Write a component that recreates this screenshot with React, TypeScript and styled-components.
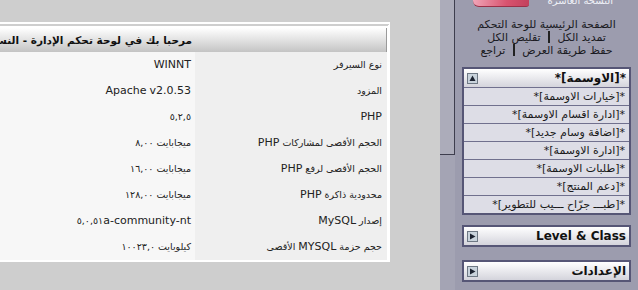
import styled, { createGlobalStyle } from 'styled-components';

const GlobalStyle = createGlobalStyle`
  html, body {
    margin: 0;
    padding: 0;
  }
  body {
    width: 638px;
    height: 290px;
    overflow: hidden;
    background: #cecece;
    font-family: "DejaVu Sans", Tahoma, sans-serif;
  }
`;

const Page = styled.div`
  display: flex;
  width: 638px;
  height: 290px;
  overflow: hidden;
`;

const MainArea = styled.div`
  flex: none;
  width: 440px;
  padding-top: 22px;
  box-sizing: border-box;
  background: #cecece;
  overflow: hidden;
`;

const Panel = styled.div`
  width: 390px;
  box-sizing: border-box;
  direction: rtl;
  border-top: 6px double #fff;
  border-right: 3px solid #fff;
  border-bottom: 2px solid #fff;
`;

const PanelHeader = styled.div`
  height: 24px;
  line-height: 24px;
  padding-right: 194px;
  background: linear-gradient(#ffffff, #c4c4c4);
  border-right: 1px solid #9a9a9a;
  font-weight: bold;
  font-size: 10.5px;
  color: #111;
  white-space: nowrap;
  overflow: hidden;
`;

const Row = styled.div`
  display: grid;
  grid-template-columns: 192px 1fr;
  height: 26px;
  font-size: 9.5px;
  color: #222;
`;

const Cell = styled.div<{ $value?: boolean }>`
  line-height: 26px;
  padding-right: ${(p) => (p.$value ? '4px' : '5px')};
  background: ${(p) => (p.$value ? '#f7f7f7' : '#efefef')};
  white-space: nowrap;
  overflow: hidden;
`;

// latin runs in the table are drawn a size up, like Verdana next to Tahoma arabic
const Latin = styled.span`
  font-size: 11px;
`;

const mixed = (text: string) =>
  text.split(/([A-Za-z][A-Za-z0-9.\-]*)/).map((part, i) => (i % 2 ? <Latin key={i}>{part}</Latin> : part));

const Sidebar = styled.div`
  flex: none;
  display: flex;
  width: 198px;
  height: 290px;
`;

const Strip = styled.div`
  flex: none;
  width: 15px;
  background: #a4a4b4;
`;

const StripBox = styled.div`
  height: 155px;
  box-sizing: border-box;
  background: #acacba;
  border-right: 1px solid #3e3e4e;
  border-bottom: 1px solid #3e3e4e;
`;

const SideMain = styled.div`
  flex: 1;
  display: flex;
  flex-direction: column;
  background: #9c9cae;
`;

const LogoArea = styled.div`
  display: flex;
  align-items: flex-start;
  height: 7px;
  overflow: hidden;
`;

const LogoImage = styled.div`
  flex: none;
  width: 56px;
  height: 7px;
  margin-left: 18px;
  background: linear-gradient(100deg, #f0a6b8, #d9536f 60%, #c2405c);
  border-bottom: 1px solid #9a3048;
  border-radius: 0 0 3px 6px;
  box-sizing: border-box;
`;

const Edition = styled.div`
  flex: none;
  margin-left: auto;
  margin-right: 25px;
  margin-top: -5px;
  direction: rtl;
  font-size: 10px;
  line-height: 11px;
  color: #eef0f6;
  white-space: nowrap;
`;

const Links = styled.div`
  direction: rtl;
  margin-top: 12px;
  text-align: center;
  font-size: 11px;
  line-height: 12px;
  color: #1a1a22;
`;

const Sep = styled.span`
  display: inline-block;
  width: 2px;
  height: 12px;
  margin: 0 4px;
  vertical-align: -2px;
  background: #222;
`;

const Box = styled.div<{ $gap: number }>`
  direction: rtl;
  margin: ${(p) => p.$gap}px 7px 0 7px;
  border: 2px solid #565676;
  background: #dddde6;
`;

const BoxHeader = styled.div`
  display: flex;
  align-items: center;
  justify-content: space-between;
  height: 18px;
  padding: 0 3px;
  background: linear-gradient(#ffffff, #d4d4dc);
  font-weight: bold;
  font-size: 12px;
  color: #111;
`;

const Item = styled.div`
  height: 17px;
  line-height: 17px;
  padding-right: 4px;
  border-top: 1px solid #70708e;
  font-size: 11px;
  color: #1a1a1a;
  white-space: nowrap;
`;

const IconBox = styled.span`
  display: inline-flex;
  width: 11px;
  height: 11px;
`;

const ToggleIcon = ({ open }: { open?: boolean }) => (
  <IconBox>
    <svg width="11" height="11" viewBox="0 0 11 11">
      <rect x="0.5" y="0.5" width="10" height="10" fill="#c9d3dc" stroke="#6e7884" />
      {open ? (
        <polygon points="2.5,8 8.5,8 5.5,2.5" fill="#1c2230" />
      ) : (
        <polygon points="3,2.5 3,8.5 8.5,5.5" fill="#1c2230" />
      )}
    </svg>
  </IconBox>
);

const serverRows: [string, string, boolean?][] = [
  ['نوع السيرفر', 'WINNT'],
  ['المزود', 'Apache v2.0.53'],
  ['PHP', '٥,٢,٥'],
  ['الحجم الأقصى لمشاركات PHP', 'ميجابايت ٨,٠٠'],
  ['الحجم الأقصى لرفع PHP', 'ميجابايت ١٦,٠٠'],
  ['محدودية ذاكرة PHP', 'ميجابايت ١٢٨,٠٠'],
  ['إصدار MySQL', '٥,٠,٥١a-community-nt', true],
  ['حجم حزمة MYSQL الأقصى', 'كيلوبايت ١٠٠٢٣,٠'],
];

const medalItems = [
  '*[خيارات الاوسمة]*',
  '*[ادارة اقسام الاوسمة]*',
  '*[اضافة وسام جديد]*',
  '*[ادارة الاوسمة]*',
  '*[طلبات الاوسمة]*',
  '*[دعم المنتج]*',
  '*[طبـــ جرّاح ـــيب للتطوير]*',
];

export default function App() {
  return (
    <Page>
      <GlobalStyle />
      <MainArea>
        <Panel>
          <PanelHeader>مرحبا بك في لوحة تحكم الإدارة - النسخة العاشرة</PanelHeader>
          {serverRows.map(([label, value, ltr]) => (
            <Row key={label}>
              <Cell>{mixed(label)}</Cell>
              <Cell $value>{ltr ? <bdo dir="ltr">{mixed(value)}</bdo> : mixed(value)}</Cell>
            </Row>
          ))}
        </Panel>
      </MainArea>

      <Sidebar>
        <Strip>
          <StripBox />
        </Strip>
        <SideMain>
          <LogoArea>
            <LogoImage />
            <Edition>النسخة العاشرة</Edition>
          </LogoArea>
          <Links>
            <div>الصفحة الرئيسية للوحة التحكم</div>
            <div>
              تمديد الكل <Sep /> تقليص الكل
            </div>
            <div>
              حفظ طريقة العرض <Sep /> تراجع
            </div>
          </Links>

          <Box $gap={10}>
            <BoxHeader>
              <span>*[الاوسمة]*</span>
              <ToggleIcon open />
            </BoxHeader>
            {medalItems.map((item) => (
              <Item key={item}>{item}</Item>
            ))}
          </Box>

          <Box $gap={10}>
            <BoxHeader>
              <span>Level &amp; Class</span>
              <ToggleIcon />
            </BoxHeader>
          </Box>

          <Box $gap={13}>
            <BoxHeader>
              <span>الإعدادات</span>
              <ToggleIcon />
            </BoxHeader>
          </Box>
        </SideMain>
      </Sidebar>
    </Page>
  );
}
